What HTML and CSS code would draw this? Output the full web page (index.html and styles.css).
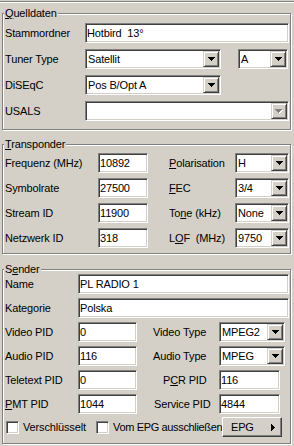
FILE: index.html
```html
<html>
<head>
  <title>Sender bearbeiten</title>
  <meta charset="utf-8">
  <link rel="stylesheet" href="styles.css">
</head>
<body>
<div class="topline"></div>

<fieldset class="grp g1">
  <legend><u>Q</u>uelldaten</legend>
  <div class="rows gap6">
    <div class="row">
      <span class="lbl w80">Stammordner</span>
      <div class="edit grow">Hotbird  13°</div>
    </div>
    <div class="row">
      <span class="lbl w80">Tuner Type</span>
      <div class="combo w136"><span class="val">Satellit</span><span class="btn"><svg width="7" height="4" viewBox="0 0 7 4"><path d="M0 0h7v1H0zM1 1h5v1H1zM2 2h3v1H2zM3 3h1v1H3z"/></svg></span></div>
      <div class="combo w50 ml17"><span class="val">A</span><span class="btn"><svg width="7" height="4" viewBox="0 0 7 4"><path d="M0 0h7v1H0zM1 1h5v1H1zM2 2h3v1H2zM3 3h1v1H3z"/></svg></span></div>
    </div>
    <div class="row">
      <span class="lbl w80">DiSEqC</span>
      <div class="combo w136"><span class="val">Pos B/Opt A</span><span class="btn"><svg width="7" height="4" viewBox="0 0 7 4"><path d="M0 0h7v1H0zM1 1h5v1H1zM2 2h3v1H2zM3 3h1v1H3z"/></svg></span></div>
    </div>
    <div class="row">
      <span class="lbl w80">USALS</span>
      <div class="combo grow"><span class="val"></span><span class="btn"><svg width="8" height="5" viewBox="0 0 8 5"><path fill="#fff" d="M1 1h7v1H1zM2 2h5v1H2zM3 3h3v1H3zM4 4h1v1H4z"/><path fill="#808080" d="M0 0h7v1H0zM1 1h5v1H1zM2 2h3v1H2zM3 3h1v1H3z"/></svg></span></div>
    </div>
  </div>
</fieldset>

<fieldset class="grp g2">
  <legend><u>T</u>ransponder</legend>
  <div class="rows gap5">
    <div class="row">
      <span class="lbl w93">Frequenz (MHz)</span>
      <div class="edit w50">10892</div>
      <span class="lbl w66 ml21"><u>P</u>olarisation</span>
      <div class="combo w54"><span class="val">H</span><span class="btn"><svg width="7" height="4" viewBox="0 0 7 4"><path d="M0 0h7v1H0zM1 1h5v1H1zM2 2h3v1H2zM3 3h1v1H3z"/></svg></span></div>
    </div>
    <div class="row">
      <span class="lbl w93">Symbolrate</span>
      <div class="edit w50">27500</div>
      <span class="lbl w66 ml21"><u>F</u>EC</span>
      <div class="combo w54"><span class="val">3/4</span><span class="btn"><svg width="7" height="4" viewBox="0 0 7 4"><path d="M0 0h7v1H0zM1 1h5v1H1zM2 2h3v1H2zM3 3h1v1H3z"/></svg></span></div>
    </div>
    <div class="row">
      <span class="lbl w93">Stream ID</span>
      <div class="edit w50">11900</div>
      <span class="lbl w66 ml21">To<u>n</u>e (kHz)</span>
      <div class="combo w54"><span class="val">None</span><span class="btn"><svg width="7" height="4" viewBox="0 0 7 4"><path d="M0 0h7v1H0zM1 1h5v1H1zM2 2h3v1H2zM3 3h1v1H3z"/></svg></span></div>
    </div>
    <div class="row">
      <span class="lbl w93">Netzwerk ID</span>
      <div class="edit w50">318</div>
      <span class="lbl w66 ml21">L<u>O</u>F  (MHz)</span>
      <div class="combo w54"><span class="val">9750</span><span class="btn"><svg width="7" height="4" viewBox="0 0 7 4"><path d="M0 0h7v1H0zM1 1h5v1H1zM2 2h3v1H2zM3 3h1v1H3z"/></svg></span></div>
    </div>
  </div>
</fieldset>

<fieldset class="grp g3">
  <legend>S<u>e</u>nder</legend>
  <div class="rows gap4 up2">
    <div class="row">
      <span class="lbl w73">Name</span>
      <div class="edit grow">PL RADIO 1</div>
    </div>
    <div class="row">
      <span class="lbl w73">Kategorie</span>
      <div class="edit grow">Polska</div>
    </div>
    <div class="row">
      <span class="lbl w73">Video PID</span>
      <div class="edit w59">0</div>
      <span class="lbl w66 ml16">Video Type</span>
      <div class="combo w66"><span class="val">MPEG2</span><span class="btn"><svg width="7" height="4" viewBox="0 0 7 4"><path d="M0 0h7v1H0zM1 1h5v1H1zM2 2h3v1H2zM3 3h1v1H3z"/></svg></span></div>
    </div>
    <div class="row">
      <span class="lbl w73">Audio PID</span>
      <div class="edit w59">116</div>
      <span class="lbl w66 ml16">Audio Type</span>
      <div class="combo w66"><span class="val">MPEG</span><span class="btn"><svg width="7" height="4" viewBox="0 0 7 4"><path d="M0 0h7v1H0zM1 1h5v1H1zM2 2h3v1H2zM3 3h1v1H3z"/></svg></span></div>
    </div>
    <div class="row">
      <span class="lbl w73">Teletext PID</span>
      <div class="edit w59">0</div>
      <span class="lbl w66 ml16 pl10">P<u>C</u>R PID</span>
      <div class="edit w61">116</div>
    </div>
    <div class="row">
      <span class="lbl w73"><u>P</u>MT PID</span>
      <div class="edit w59">1044</div>
      <span class="lbl w66 ml16 pl1">Service PID</span>
      <div class="edit w61">4844</div>
    </div>
  </div>
  <div class="row cbrow">
    <label class="cbitem first"><span class="check"></span><span class="cbtext">Verschlüsselt</span></label>
    <label class="cbitem second"><span class="check"></span><span class="cbtext tight">Vom EPG ausschließen</span></label>
    <div class="button">EPG<svg class="arr" width="4" height="7" viewBox="0 0 4 7"><path d="M0 0h1v7H0zM1 1h1v5H1zM2 2h1v3H2zM3 3h1v1H3z"/></svg></div>
  </div>
</fieldset>

</body>
</html>
```

FILE: styles.css
```css
body {
  margin: 0;
  width: 294px;
  height: 446px;
  overflow: hidden;
  background-color: #d4d0c8;
  color: #000;
  font-family: "Liberation Sans", Arial, sans-serif;
  font-size: 11px;
  letter-spacing: -0.15px;
}

.topline {
  margin-top: 1px;
  border-top: 1px solid #808080;
  border-bottom: 1px solid #fff;
}

/* group boxes, etched frame */
.grp {
  box-sizing: border-box;
  width: 289px;
  min-width: 0;
  margin: 0 0 0 2px;
  padding: 0 1px 0 2px;
  border: 1px solid #808080;
  box-shadow: inset 1px 1px 0 #fff, 1px 1px 0 #fff;
}
.grp legend {
  margin-left: -1px;
  padding: 0 1px;
  line-height: 13px;
  background-color: #d4d0c8;
}
.g1 { margin-top: 4px; padding-top: 3px; padding-bottom: 8px; }
.g2 { margin-top: 8px; padding-top: 2px; padding-bottom: 5px; }
.g3 { margin-top: 9px; padding-top: 0; padding-bottom: 6px; }

.rows { display: flex; flex-direction: column; }
.gap6 { gap: 6px; }
.gap5 { gap: 5px; }
.gap4 { gap: 4px; }
.up2 { margin-top: -2px; }

.row {
  display: flex;
  align-items: center;
  height: 20px;
}
.lbl {
  flex: none;
  line-height: 14px;
  white-space: pre;
}
u { text-underline-offset: 1px; }

.w50 { width: 50px; }
.w54 { width: 54px; }
.w59 { width: 59px; }
.w61 { width: 61px; }
.w66 { width: 66px; }
.w73 { width: 73px; }
.w80 { width: 80px; }
.w93 { width: 93px; }
.w136 { width: 136px; }
.grow { flex: 1; }
.ml16 { margin-left: 16px; }
.ml17 { margin-left: 17px; }
.ml21 { margin-left: 21px; }
.pl1 { box-sizing: border-box; padding-left: 1px; }
.pl10 { box-sizing: border-box; padding-left: 10px; }

/* sunken edit and combo fields */
.edit, .combo {
  flex: none;
  box-sizing: border-box;
  height: 20px;
  padding: 1px;
  background-color: #fff;
  border: 1px solid;
  border-color: #808080 #fff #fff #808080;
  box-shadow: inset 1px 1px 0 #404040, inset -1px -1px 0 #d4d0c8;
  line-height: 16px;
  white-space: pre;
  overflow: hidden;
}
.edit.grow, .combo.grow { flex: 1; }
.combo { display: flex; }
.combo .val {
  flex: 1;
  padding-left: 1px;
  overflow: hidden;
}
.combo .btn {
  flex: none;
  box-sizing: border-box;
  width: 16px;
  height: 16px;
  display: flex;
  align-items: center;
  justify-content: center;
  background-color: #d4d0c8;
  border: 1px solid;
  border-color: #d4d0c8 #404040 #404040 #d4d0c8;
  box-shadow: inset 1px 1px 0 #fff, inset -1px -1px 0 #808080;
}
.combo .btn svg { display: block; }

/* checkboxes and EPG button */
.cbrow { margin-top: 3px; }
.cbitem {
  flex: none;
  display: flex;
  align-items: center;
  overflow: hidden;
  white-space: nowrap;
}
.cbitem.first { width: 90px; margin-left: 1px; }
.cbitem.second { width: 126px; }
.check {
  flex: none;
  box-sizing: border-box;
  width: 13px;
  height: 13px;
  background-color: #fff;
  border: 1px solid;
  border-color: #808080 #fff #fff #808080;
  box-shadow: inset 1px 1px 0 #404040, inset -1px -1px 0 #d4d0c8;
}
.cbtext {
  margin-left: 4px;
  line-height: 14px;
}
.cbtext.tight { letter-spacing: -0.35px; }
.button {
  flex: none;
  box-sizing: border-box;
  width: 60px;
  height: 20px;
  display: flex;
  align-items: center;
  padding: 0 6px 0 8px;
  border: 1px solid;
  border-color: #fff #404040 #404040 #fff;
  box-shadow: inset -1px -1px 0 #808080;
  line-height: 14px;
}
.button .arr {
  display: block;
  margin-left: auto;
}
```
